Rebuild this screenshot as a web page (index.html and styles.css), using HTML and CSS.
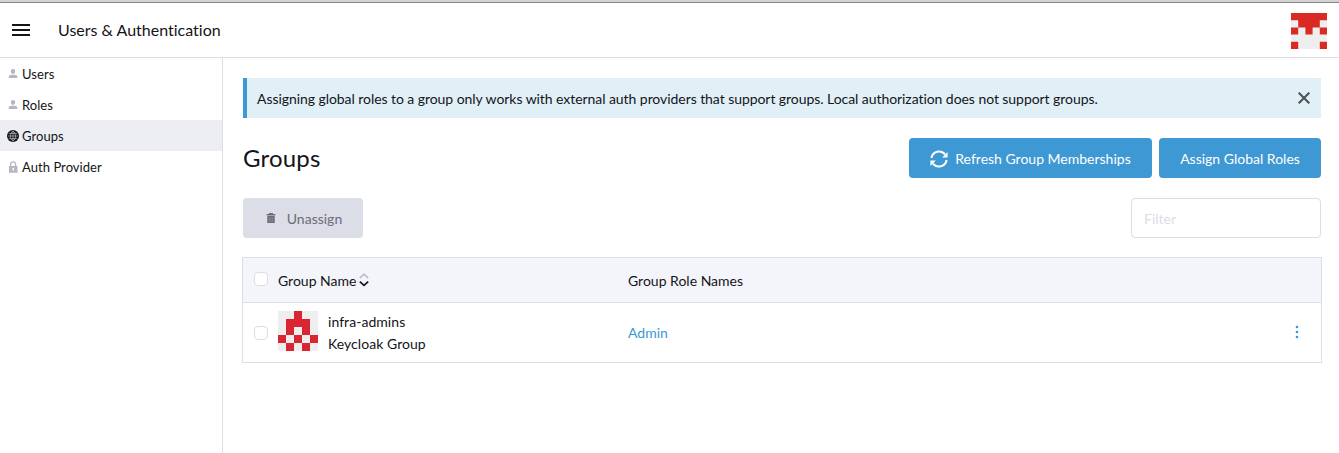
FILE: index.html
```html
<!DOCTYPE html>
<html lang="en">
<head>
<meta charset="utf-8">
<title>Users &amp; Authentication</title>
<link rel="stylesheet" href="styles.css">
</head>
<body>
<header class="topbar">
  <svg class="menu" width="18" height="12" viewBox="0 0 18 12"><path d="M0 0h18v2H0zM0 5h18v2H0zM0 10h18v2H0z" fill="#141419"/></svg>
  <span class="product">Users &amp; Authentication</span>
  <svg class="avatar" width="36" height="36" viewBox="0 0 5 5"><path fill="#eee" d="M0 0h5v5H0z"/><path fill="#d92b24" d="M0 0h5v1H4v1H3v1H2V2H1V1H0zM0 2h1v1H0zM4 2h1v1H4zM0 4h1v1H0zM4 4h1v1H4z"/></svg>
</header>
<div class="layout">
  <nav class="sidebar">
    <a class="item"><svg class="ico" width="12" height="12" viewBox="0 0 12 12"><path fill="#b6b6c2" d="M6 1a2.2 2.4 0 0 1 0 4.9A2.2 2.4 0 0 1 6 1zM1.7 10V8.7C1.7 7.2 3.4 6.8 6 6.8s4.4.4 4.4 1.9V10z"/></svg>Users</a>
    <a class="item"><svg class="ico" width="12" height="12" viewBox="0 0 12 12"><path fill="#b6b6c2" d="M6 1a2.2 2.4 0 0 1 0 4.9A2.2 2.4 0 0 1 6 1zM1.7 10V8.7C1.7 7.2 3.4 6.8 6 6.8s4.4.4 4.4 1.9V10z"/></svg>Roles</a>
    <a class="item active"><svg class="ico" width="12" height="12" viewBox="0 0 12 12"><circle cx="6" cy="6" r="6" fill="#141419"/><path d="M6 1v10M1 6h10M1.8 3.4h8.4M1.8 8.6h8.4M6 .9C2.6 3.4 2.6 8.6 6 11.1M6 .9c3.4 2.5 3.4 7.7 0 10.2" fill="none" stroke="#edeef3" stroke-width=".5"/></svg>Groups</a>
    <a class="item"><svg class="ico" width="12" height="12" viewBox="0 0 12 12"><path d="M3.6 5.5V3.3a2.5 2.5 0 0 1 5 0v2.2" fill="none" stroke="#b6b6c2" stroke-width="1.3"/><path fill="#b6b6c2" fill-rule="evenodd" d="M2 5h8.5v6.8H2zM6.2 6.8a1 1 0 0 0-.5 1.8V10h1V8.6a1 1 0 0 0-.5-1.8z"/></svg>Auth Provider</a>
  </nav>
  <main class="main">
    <div class="banner">
      <span>Assigning global roles to a group only works with external auth providers that support groups. Local authorization does not support groups.</span>
      <svg class="close" width="12" height="12" viewBox="0 0 12 12"><path d="M.7.7l10.6 10.6M11.3.7L.7 11.3" stroke="#4d5357" stroke-width="2.1"/></svg>
    </div>
    <div class="title-row">
      <h1>Groups</h1>
      <button class="btn refresh"><svg width="18" height="18" viewBox="0 0 18 18"><path d="M1.4 8A7.7 7.7 0 0 1 15 4.4M16.6 10A7.7 7.7 0 0 1 3 13.6" fill="none" stroke="#fff" stroke-width="2"/><path fill="#fff" d="M17.6 2v5.4h-5.4zM.4 16v-5.4h5.4z"/></svg>Refresh Group Memberships</button>
      <button class="btn">Assign Global Roles</button>
    </div>
    <div class="tools">
      <button class="btn disabled"><svg width="10" height="12" viewBox="0 0 10 12"><path fill="#6c6c76" d="M3 1h4v1h2.3v1.4H.7V2H3zM1.3 4h7.4v7H1.3z"/><path d="M3.3 5v5M5 5v5M6.7 5v5" stroke="#9a9ca6" stroke-width=".6"/></svg>Unassign</button>
      <input class="filter" type="text" placeholder="Filter">
    </div>
    <div class="table">
      <div class="row head">
        <span class="check"></span>
        <span class="name">Group Name<svg class="sort" width="10" height="14" viewBox="0 0 10 14"><path d="M.8 5L5 1.2 9.2 5" fill="none" stroke="#b6b6c2" stroke-width="1.5"/><path d="M.8 8.6L5 12.4l4.2-3.8" fill="none" stroke="#141419" stroke-width="1.7"/></svg></span>
        <span>Group Role Names</span>
      </div>
      <div class="row body">
        <span class="check"></span>
        <div class="name">
          <svg width="40" height="40" viewBox="0 0 5 5"><path fill="#eee" d="M0 0h5v5H0z"/><path fill="#d92632" d="M2 0h1v1h1v2H3V2H2v1H1V1h1zM0 3h1v1H0zM2 3h1v1H2zM4 3h1v1H4zM1 4h1v1H1zM3 4h1v1H3z"/></svg>
          <div class="principal"><div>infra-admins</div><div>Keycloak Group</div></div>
        </div>
        <a class="link">Admin</a>
        <svg class="more" width="4" height="14" viewBox="0 0 4 14"><g fill="#3d98d3"><circle cx="2" cy="2" r="1.3"/><circle cx="2" cy="7" r="1.3"/><circle cx="2" cy="12" r="1.3"/></g></svg>
      </div>
    </div>
  </main>
</div>
</body>
</html>
```
FILE: styles.css
```css
* { box-sizing: border-box; }
body {
  margin: 0;
  height: 453px;
  display: flex;
  flex-direction: column;
  overflow: hidden;
  background: #fff;
  color: #141419;
  font: 14px/21px Lato, sans-serif;
  font-variant-ligatures: none;
}
svg { display: block; flex: none; }
.topbar {
  height: 58px;
  flex: none;
  display: flex;
  align-items: center;
  padding: 1px 12px 0;
  border-top: 2px solid #d3d3d3;
  border-bottom: 1px solid #dcdee7;
  box-shadow: inset 0 1px #858585;
}
.product { margin: -2px 0 0 28px; font-size: 16px; }
.avatar { margin: 1px 0 0 auto; }
.layout { flex: 1; display: flex; }
.sidebar { width: 223px; border-right: 1px solid #dcdee7; }
.item {
  height: 31px;
  display: flex;
  align-items: center;
  padding: 1px 0 0 7px;
  font-size: 13px;
  letter-spacing: .05px;
}
.ico { margin-right: 3px; }
.active { background: #edeef3; }
.main { flex: 1; padding: 20px 18px 0 20px; }
.banner {
  height: 40px;
  display: flex;
  align-items: center;
  justify-content: space-between;
  padding-right: 11px;
  padding-left: 10px;
  border-left: 4px solid #3d98d3;
  background: #e1f0f7;
  letter-spacing: -.06px;
}
.title-row { display: flex; align-items: center; gap: 7px; margin-top: 20px; }
h1 { margin: 0 auto 0 0; font-size: 24px; font-weight: 400; line-height: 36px; letter-spacing: .2px; }
.btn {
  height: 40px;
  width: 162px;
  display: flex;
  align-items: center;
  justify-content: center;
  padding: 0;
  border: 0;
  border-radius: 4px;
  background: #3d98d3;
  color: #fff;
  font: 14px/21px Lato, sans-serif;
}
.refresh { width: 243px; gap: 7px; }
.refresh svg { margin-top: 1px; }
.tools { display: flex; justify-content: space-between; margin-top: 20px; }
.disabled { width: 120px; padding-left: 2px; gap: 11px; background: #dcdee7; color: #6c6c76; }
.filter {
  width: 190px;
  height: 40px;
  padding: 0 12px;
  border: 1px solid #dcdee7;
  border-radius: 4px;
  font: 14px Lato, sans-serif;
}
.filter::placeholder { color: #dcdee7; opacity: 1; }
.table { margin: 19px -1px 0; border: 1px solid #dcdee7; }
.row {
  display: grid;
  grid-template-columns: 24px 350px 1fr 4px;
  align-items: center;
  padding: 0 22px 0 11px;
}
.head { height: 45px; background: #f4f5fa; border-bottom: 1px solid #dcdee7; }
.body { height: 59px; }
.check { width: 14px; height: 14px; border: 1px solid #dcdee7; border-radius: 4px; background: #fff; }
.head .check { margin-top: -2px; }
.name { display: flex; align-items: center; }
.body .name { gap: 10px; margin-top: -3px; }
.principal { line-height: 22px; padding-top: 3px; letter-spacing: .05px; }
.sort { margin-left: 3px; }
.link { color: #3d98d3; margin-top: -1px; }
.more { margin-top: -2px; }
```
